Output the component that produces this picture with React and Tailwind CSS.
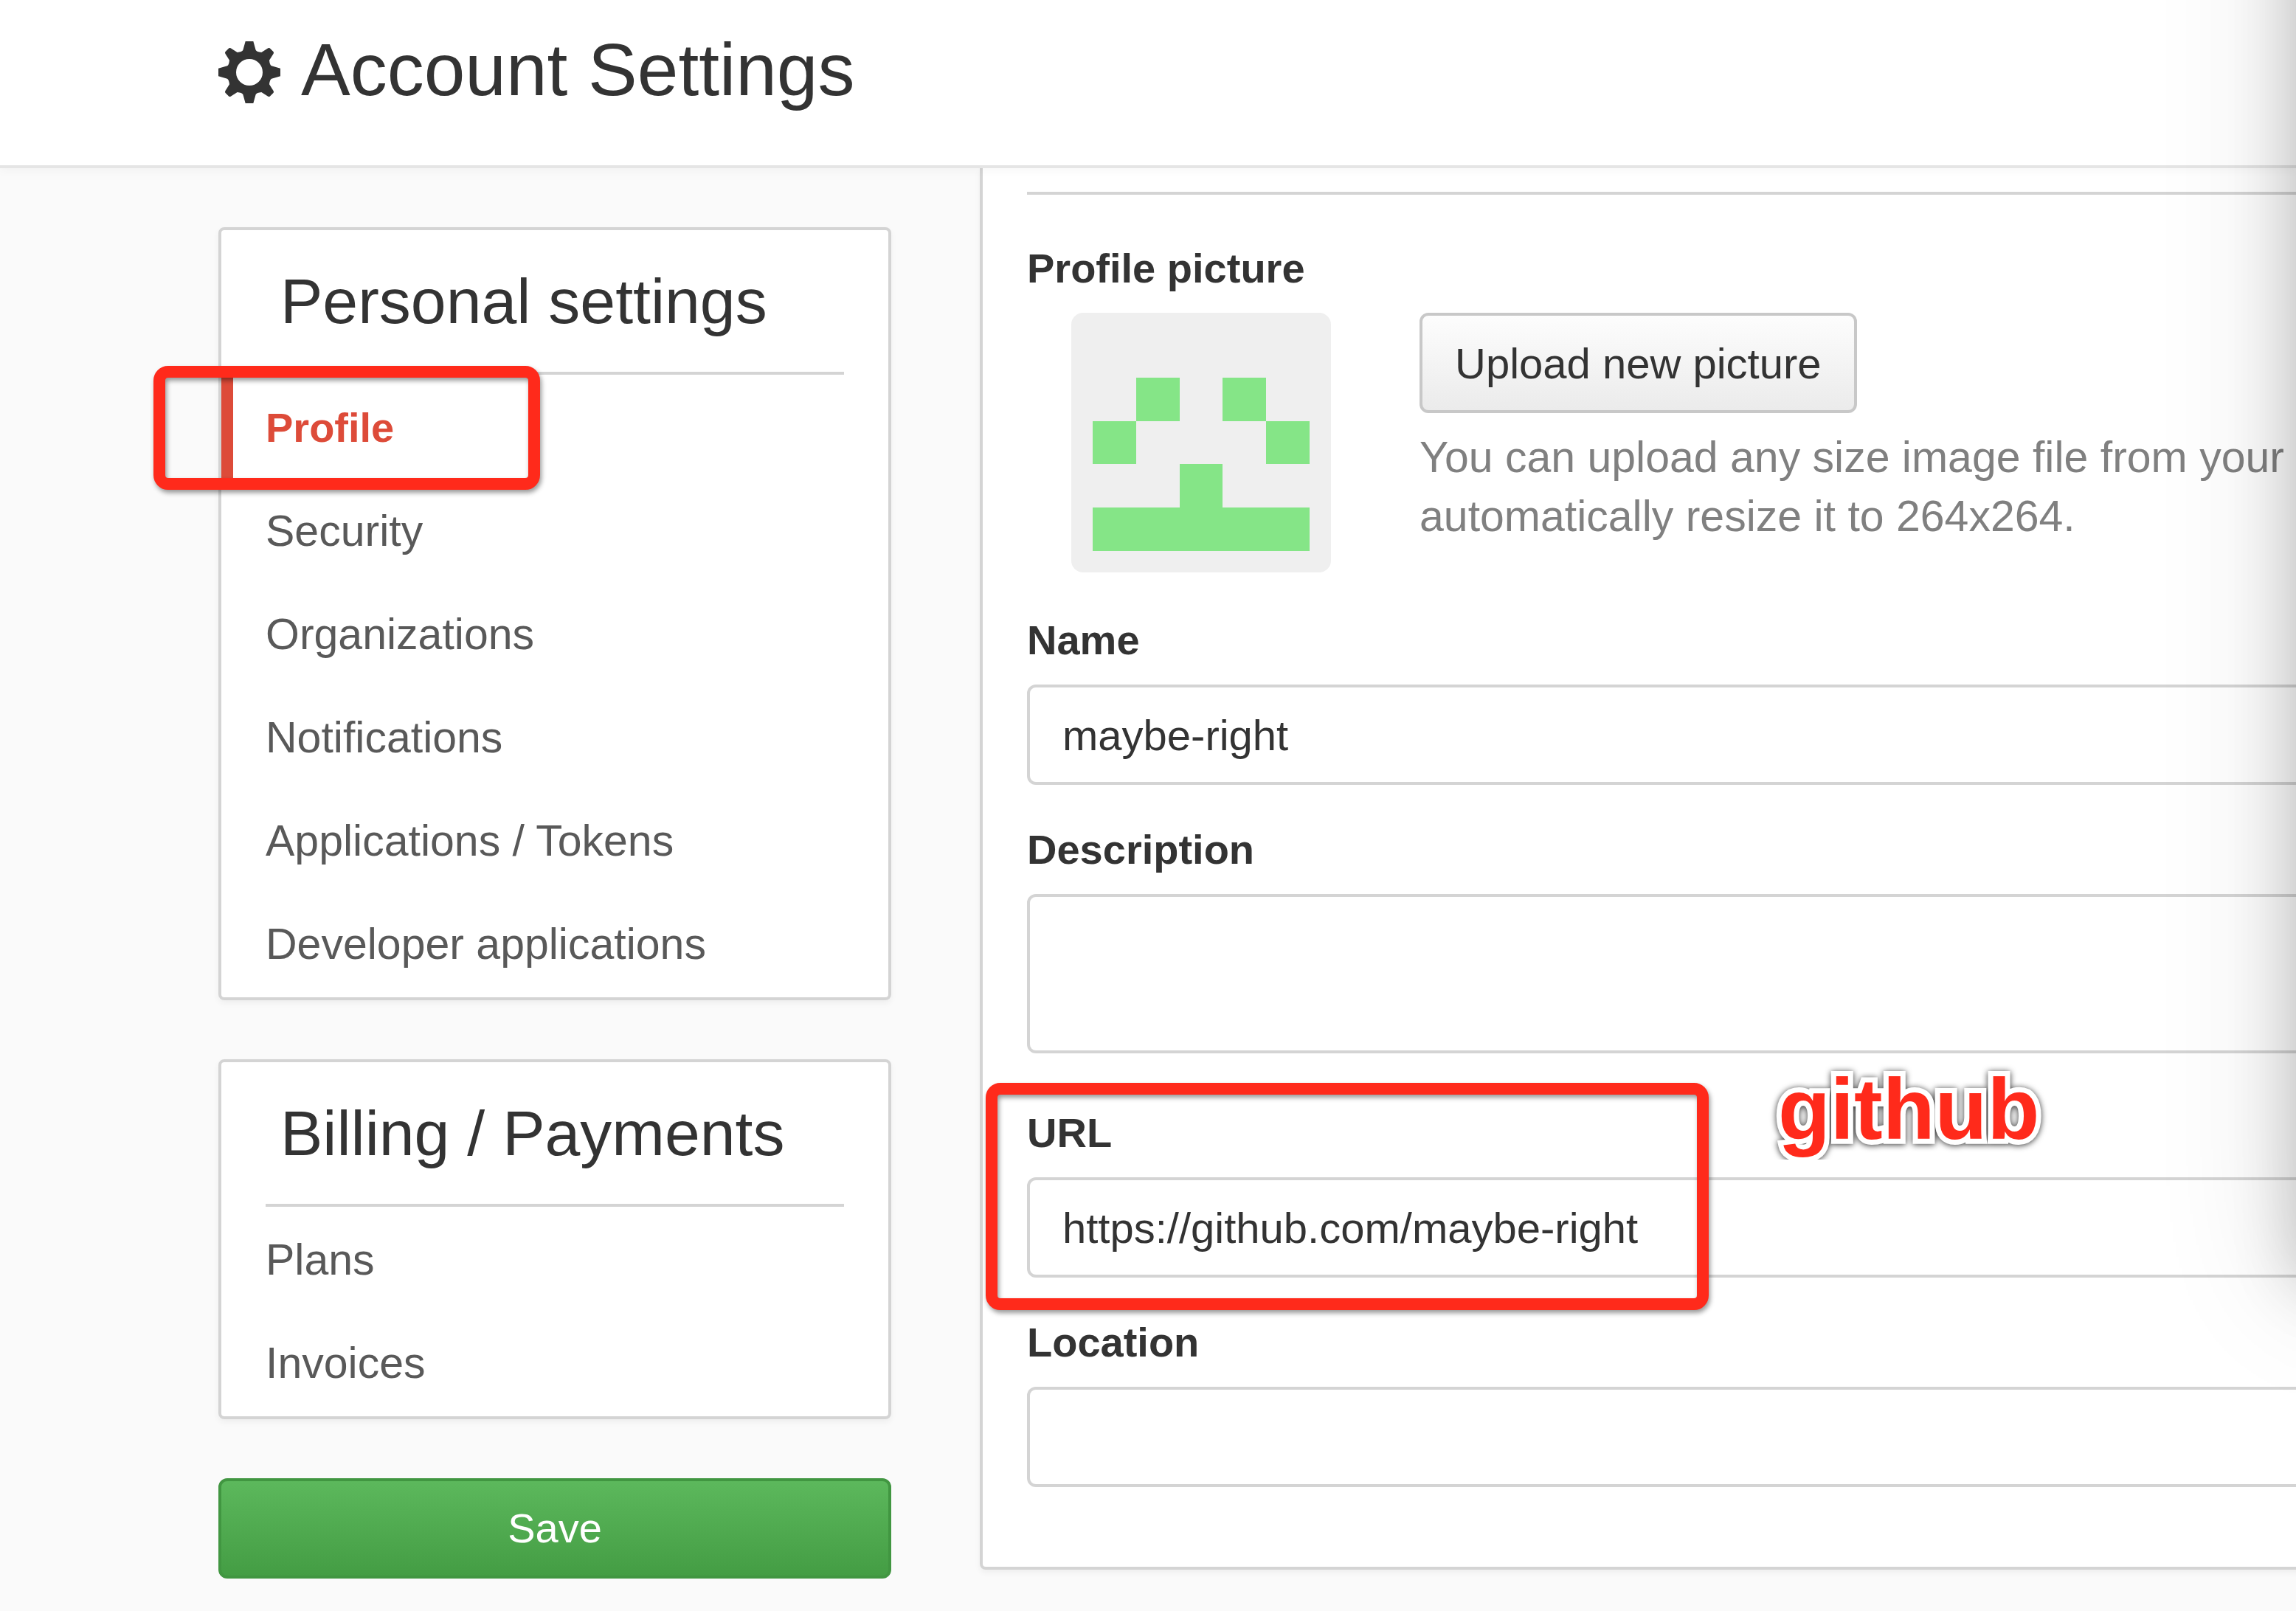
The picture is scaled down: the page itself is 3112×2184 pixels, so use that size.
const personalLinks = [
  { label: "Profile", active: true },
  { label: "Security" },
  { label: "Organizations" },
  { label: "Notifications" },
  { label: "Applications / Tokens" },
  { label: "Developer applications" },
];

const billingLinks = [{ label: "Plans" }, { label: "Invoices" }];

function GearIcon() {
  return (
    <svg viewBox="-126 -126 252 252" className="mt-2 size-[84px] shrink-0" fill="#333333" aria-hidden="true">
      <path
        fillRule="evenodd"
        d="M-16-126L16-126L26-90Q30-83 49-81L76-98Q80-100 83-98L98-83Q100-80 98-76L81-49Q83-30 90-26L126-16L126 16L90 26Q83 30 81 49L98 76Q100 80 98 83L83 98Q80 100 76 98L49 81Q30 83 26 90L16 126L-16 126L-26 90Q-30 83-49 81L-76 98Q-80 100-83 98L-98 83Q-100 80-98 76L-81 49Q-83 30-90 26L-126 16L-126-16L-90-26Q-83-30-81-49L-98-76Q-100-80-98-83L-83-98Q-80-100-76-98L-49-81Q-30-83-26-90ZM54 0A54 54 0 1 0-54 0A54 54 0 1 0 54 0Z"
      />
    </svg>
  );
}

function Identicon() {
  return (
    <svg
      viewBox="0 0 12 12"
      className="size-[352px] shrink-0 rounded-2xl bg-[#efefef]"
      fill="#85e587"
      shapeRendering="crispEdges"
      role="img"
      aria-label="Profile picture"
    >
      <path d="M3 3h2v2h-2zM7 3h2v2h-2zM1 5h2v2h-2zM9 5h2v2h-2zM5 7h2v2h4v2h-10v-2h4z" />
    </svg>
  );
}

/* Red rounded marker drawn over the element that contains it. */
function Highlight({ className }) {
  return (
    <div
      className={`pointer-events-none absolute z-10 rounded-[20px] border-16 border-[#ff2a1b] drop-shadow-[2px_4px_3px_rgba(0,0,0,0.4)] ${className}`}
    />
  );
}

function NavCard({ title, links }) {
  return (
    <nav
      aria-label={title}
      className="rounded-lg border-4 border-[#d4d4d4] bg-white shadow-[0_4px_8px_rgba(0,0,0,0.05)]"
    >
      <h2 className="mx-15 mb-1 border-b-4 border-[#d4d4d4] pl-5 text-[86px] leading-[192px] text-[#333333]">
        {title}
      </h2>
      <ul>
        {links.map((link) => (
          <li key={link.label} className="relative">
            {link.active ? (
              <>
                <a
                  href="#profile"
                  aria-current="page"
                  className="block border-l-16 border-[#dd4b39] pb-1 pl-11 text-[56px] leading-[136px] font-bold text-[#dd4b39]"
                >
                  {link.label}
                </a>
                <Highlight className="-top-4 -left-23 h-42 w-[524px]" />
              </>
            ) : (
              <a href="#settings" className="block pb-1 pl-15 text-[59px] leading-[136px] text-[#595959]">
                {link.label}
              </a>
            )}
          </li>
        ))}
      </ul>
    </nav>
  );
}

const labelClass = "mb-5 block text-[56px] leading-20 font-bold text-[#333333]";
const inputClass =
  "block w-full rounded-xl border-4 border-[#d4d4d4] bg-white px-11 text-[58px] text-[#333333] outline-none";

export default function App() {
  return (
    <div className="relative min-h-screen overflow-hidden bg-[#fafafa] font-['Liberation_Sans',Arial,sans-serif]">
      <header className="relative z-10 border-b-4 border-[#e5e5e5] bg-white pb-9 pl-[296px] shadow-[0_4px_12px_rgba(0,0,0,0.03)]">
        <h1 className="flex items-center gap-7 text-[100px] leading-[188px] text-[#333333]">
          <GearIcon />
          Account Settings
        </h1>
      </header>

      <div className="flex items-start gap-30 pl-[296px]">
        <aside className="flex w-[912px] shrink-0 flex-col gap-20 pt-20">
          <NavCard title="Personal settings" links={personalLinks} />
          <NavCard title="Billing / Payments" links={billingLinks} />
          <button
            type="submit"
            form="profile-form"
            className="h-34 rounded-xl border-4 border-[#419641] bg-linear-to-b from-[#5cb85c] to-[#449d44] text-[56px] text-white"
          >
            Save
          </button>
        </aside>

        <form
          id="profile-form"
          onSubmit={(event) => event.preventDefault()}
          className="-mr-20 min-w-0 flex-1 rounded-b-lg border-4 border-t-0 border-[#d4d4d4] bg-white px-15 pt-8 pb-27 shadow-[0_4px_8px_rgba(0,0,0,0.05)]"
        >
          <hr className="mb-15 border-t-4 border-[#d4d4d4]" />

          <section className="mb-13">
            <h3 className={labelClass}>Profile picture</h3>
            <div className="flex items-start gap-30 pl-15">
              <Identicon />
              <div className="min-w-0">
                <button
                  type="button"
                  className="h-34 rounded-xl border-4 border-[#c8c8c8] bg-linear-to-b from-[#fdfdfd] to-[#ebebeb] px-11 text-[58px] text-[#333333]"
                >
                  Upload new picture
                </button>
                <p className="mt-5 text-[59px] leading-20 whitespace-nowrap text-[#808080]">
                  You can upload any size image file from your local
                  <br />
                  automatically resize it to 264x264.
                </p>
              </div>
            </div>
          </section>

          <div className="mb-12">
            <label htmlFor="name" className={labelClass}>Name</label>
            <input id="name" type="text" defaultValue="maybe-right" className={`${inputClass} h-34`} />
          </div>

          <div className="mb-17">
            <label htmlFor="description" className={labelClass}>Description</label>
            <textarea id="description" className={`${inputClass} h-54 resize-none py-6`} />
          </div>

          <div className="relative mb-12">
            <label htmlFor="url" className={labelClass}>URL</label>
            <input
              id="url"
              type="text"
              defaultValue="https://github.com/maybe-right"
              className={`${inputClass} h-34`}
            />
            <Highlight className="-top-7 -left-14 h-77 w-[980px]" />
            <div className="absolute -top-15 left-[1002px] overflow-hidden px-4">
              <span className="block text-[116px] leading-[136px] font-bold text-[#ff2a1b] drop-shadow-[0_1px_4px_rgba(0,0,0,0.8)] [-webkit-text-stroke:14px_white] [paint-order:stroke_fill] [stroke-linejoin:round]">
                github
              </span>
            </div>
          </div>

          <div>
            <label htmlFor="location" className={labelClass}>Location</label>
            <input id="location" type="text" className={`${inputClass} h-34`} />
          </div>
        </form>
      </div>

      {/* Shadow cast by a window standing just past the right edge. */}
      <div className="pointer-events-none absolute -top-60 left-full z-20 h-[1980px] w-200 shadow-[0_0_80px_rgba(0,0,0,0.2),0_0_180px_rgba(0,0,0,0.14)]" />
    </div>
  );
}
